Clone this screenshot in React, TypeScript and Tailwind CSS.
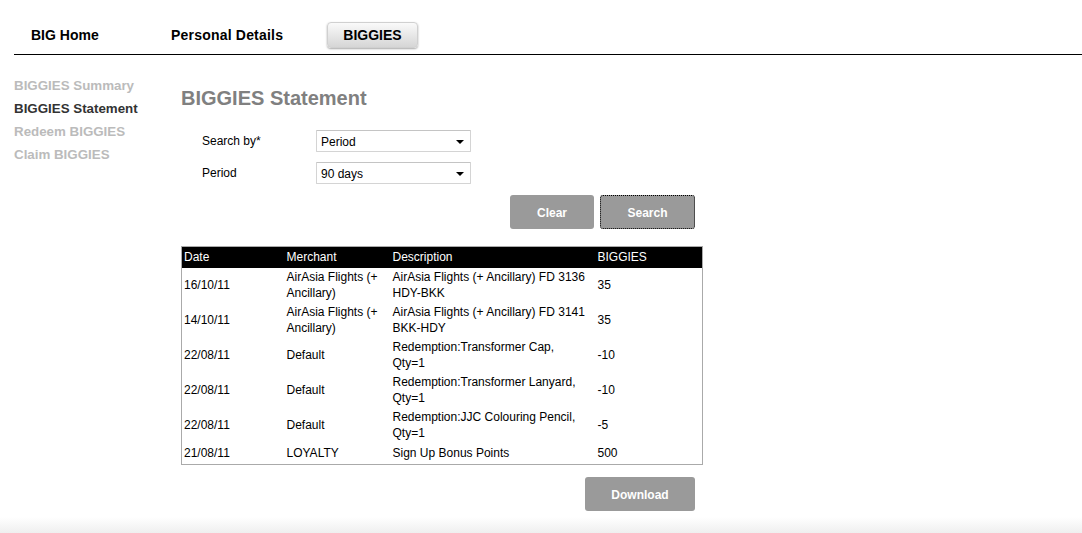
import React from 'react';

type Row = { date: string; merchant: string; description: string; points: string };

const rows: Row[] = [
  { date: '16/10/11', merchant: 'AirAsia Flights (+ Ancillary)', description: 'AirAsia Flights (+ Ancillary) FD 3136 HDY-BKK', points: '35' },
  { date: '14/10/11', merchant: 'AirAsia Flights (+ Ancillary)', description: 'AirAsia Flights (+ Ancillary) FD 3141 BKK-HDY', points: '35' },
  { date: '22/08/11', merchant: 'Default', description: 'Redemption:Transformer Cap, Qty=1', points: '-10' },
  { date: '22/08/11', merchant: 'Default', description: 'Redemption:Transformer Lanyard, Qty=1', points: '-10' },
  { date: '22/08/11', merchant: 'Default', description: 'Redemption:JJC Colouring Pencil, Qty=1', points: '-5' },
  { date: '21/08/11', merchant: 'LOYALTY', description: 'Sign Up Bonus Points', points: '500' },
];

const sideLinks = [
  { label: 'BIGGIES Summary', active: false },
  { label: 'BIGGIES Statement', active: true },
  { label: 'Redeem BIGGIES', active: false },
  { label: 'Claim BIGGIES', active: false },
];

const FakeSelect: React.FC<{ value: string }> = ({ value }) => (
  <div className="w-[155px] h-[22px] border border-[#d4d4d4] border-t-[#c4c4c4] rounded-[1px] bg-white flex items-center justify-between pl-[4px] pr-[4px] pt-px text-[12px] text-black">
    <span>{value}</span>
    <span className="w-0 h-0 border-l-[4px] border-r-[4px] border-t-[4px] border-l-transparent border-r-transparent border-t-black mr-[2px]" />
  </div>
);

const App: React.FC = () => {
  return (
    <div className="w-full h-[533px] overflow-hidden bg-white flex flex-col" style={{ fontFamily: '"Liberation Sans", Arial, sans-serif' }}>
      {/* top nav */}
      <div className="h-[55px] ml-[14px] border-b border-black shrink-0">
        <div className="flex items-center h-[26px] mt-[22px] text-[14px] font-bold text-black">
          <span className="w-[157px] pl-[17px]">BIG Home</span>
          <span className="w-[156px] tracking-[0.2px]">Personal Details</span>
          <span className="w-[91px] h-[26px] flex items-center justify-center rounded-[4px] border border-[#d0d0d0] bg-gradient-to-b from-[#fafafa] to-[#d6d6d6] shadow-[0_1px_2px_rgba(0,0,0,0.35)]">
            BIGGIES
          </span>
        </div>
      </div>

      <div className="flex pl-[14px]">
        {/* sidebar */}
        <div className="w-[167px] pt-[19px] flex flex-col">
          {sideLinks.map((l) => (
            <span
              key={l.label}
              className={`text-[13.33px] font-bold leading-[23px] ${l.active ? 'text-[#333333]' : 'text-[#bbbbbb]'}`}
            >
              {l.label}
            </span>
          ))}
        </div>

        {/* main */}
        <div className="pt-[31px] flex flex-col">
          <h1 className="text-[20px] leading-[24px] font-bold text-[#808080]">BIGGIES Statement</h1>

          <div className="mt-[20px] flex flex-col gap-[10px] text-[12px] text-black">
            <div className="flex items-center">
              <span className="w-[135px] pl-[21px]">Search by*</span>
              <FakeSelect value="Period" />
            </div>
            <div className="flex items-center">
              <span className="w-[135px] pl-[21px]">Period</span>
              <FakeSelect value="90 days" />
            </div>
          </div>

          <div className="w-[514px] mt-[11px] flex justify-end gap-[6px]">
            <button className="w-[84px] h-[34px] pt-px rounded-[3px] bg-[#9a9a9a] text-white text-[12px] font-bold">Clear</button>
            <button className="w-[95px] h-[34px] pt-px rounded-[3px] bg-[#9a9a9a] text-white text-[12px] font-bold border border-dotted border-black">Search</button>
          </div>

          <table className="mt-[17px] w-[522px] table-fixed border border-[#aaaaaa] border-collapse text-[12px] text-black">
            <colgroup>
              <col className="w-[103px]" />
              <col className="w-[106px]" />
              <col className="w-[205px]" />
              <col />
            </colgroup>
            <thead>
              <tr className="bg-black text-white h-[21px]">
                <th className="text-left font-normal pl-[2px]">Date</th>
                <th className="text-left font-normal pl-[2px]">Merchant</th>
                <th className="text-left font-normal pl-[2px]">Description</th>
                <th className="text-left font-normal pl-[2px]">BIGGIES</th>
              </tr>
            </thead>
            <tbody>
              {rows.map((r, i) => {
                const pad = i === rows.length - 1 ? 'pt-[2px] pb-[3px]' : 'py-px';
                return (
                  <tr key={i} className="leading-[16.5px]">
                    <td className={`pl-[2px] ${pad} align-middle`}>{r.date}</td>
                    <td className={`pl-[2px] pr-[4px] ${pad} align-middle`}>{r.merchant}</td>
                    <td className={`pl-[2px] pr-[8px] ${pad} align-middle`}>{r.description}</td>
                    <td className={`pl-[2px] ${pad} align-middle`}>{r.points}</td>
                  </tr>
                );
              })}
            </tbody>
          </table>

          <div className="w-[514px] mt-[12px] flex justify-end">
            <button className="w-[110px] h-[34px] pt-px rounded-[3px] bg-[#9a9a9a] text-white text-[12px] font-bold">Download</button>
          </div>
        </div>
      </div>

      <div className="mt-auto h-[16px] shrink-0 bg-gradient-to-b from-white to-[#efefef]" />
    </div>
  );
};

export default App;
